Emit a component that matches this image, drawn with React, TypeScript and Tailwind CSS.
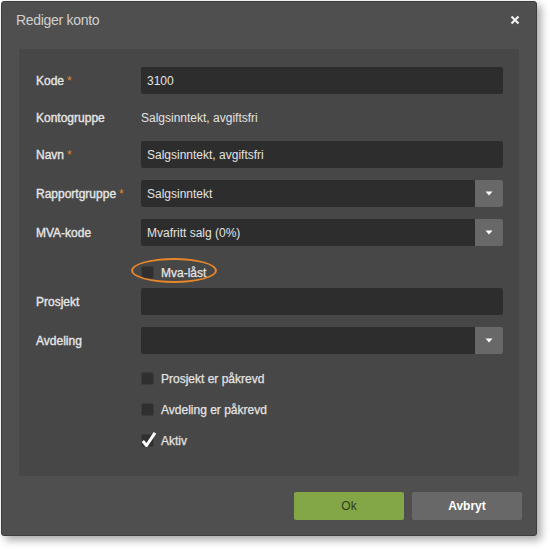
import React from 'react';

const font = { fontFamily: '"Liberation Sans", Arial, sans-serif' };

const Req = () => <span className="text-[#e08a24] ml-[3px] [-webkit-text-stroke:0px]">*</span>;

const Caret = () => (
  <div className="w-[28px] h-full bg-[#686868] rounded-r-[2px] flex items-center justify-center">
    <svg width="8" height="5" viewBox="0 0 8 5">
      <path d="M0.5 0.5 H7.5 L4 4.5 Z" fill="#fff" />
    </svg>
  </div>
);

const Input = ({ value, select }: { value?: string; select?: boolean }) => (
  <div className="flex-1 h-[27px] bg-[#2d2d2d] rounded-[2px] flex items-center">
    <span className="flex-1 pl-[6px] text-[12px] text-[#e2e2e2]">{value}</span>
    {select && <Caret />}
  </div>
);

const Row = ({ label, req, children, h = 27, mb = 12 }: { label: string; req?: boolean; children: React.ReactNode; h?: number; mb?: number }) => (
  <div className="flex items-center" style={{ height: h, marginBottom: mb }}>
    <div className="w-[105px] text-[12px] text-[#e6e6e6]">
      <span className="[-webkit-text-stroke:0.35px_#e6e6e6]">{label}</span>
      {req && <Req />}
    </div>
    {children}
  </div>
);

const Check = ({ label, checked }: { label: string; checked?: boolean }) => (
  <div className="flex items-center h-[31px] pl-[105px]">
    <div className="relative w-[13px] h-[13px] bg-[#2f2f2f] border border-[#3c3c3c] rounded-[2px]">
      {checked && (
        <svg className="absolute left-[-1px] top-[-4px]" width="16" height="17" viewBox="0 0 16 17">
          <path d="M1.8 10 L5.5 14.5 L14 1.8" stroke="#fff" strokeWidth="3" fill="none" strokeLinejoin="round" />
        </svg>
      )}
    </div>
    <span className="ml-[7px] text-[12px] text-[#e4e4e4] [-webkit-text-stroke:0.25px_#e4e4e4]">{label}</span>
  </div>
);

export default function App() {
  return (
    <div className="w-[550px] h-[549px] bg-white" style={font}>
      <div className="absolute left-[1px] top-[1px] w-[536px] h-[535px] bg-[#4f4f4f] border border-[#3d3d3d] rounded-[3px] shadow-[4px_4px_8px_rgba(0,0,0,0.35)] flex flex-col">
        <div className="h-[47px] flex items-center justify-between pl-[14px] pr-[16px] pb-[11px]">
          <span className="text-[14px] text-[#d0d0d0] tracking-[-0.3px]">Rediger konto</span>
          <svg width="10" height="10" viewBox="0 0 10 10">
            <path d="M1.5 1.5 L8.5 8.5 M8.5 1.5 L1.5 8.5" stroke="#f0f0f0" strokeWidth="2.2" />
          </svg>
        </div>
        <div className="mx-[17px] h-[427px] bg-[#474747] rounded-[2px] pt-[18px] pl-[17px] pr-[16px]">
          <Row label="Kode" req>
            <Input value="3100" />
          </Row>
          <Row label="Kontogruppe" h={23}>
            <span className="text-[12px] text-[#e2e2e2]">Salgsinntekt, avgiftsfri</span>
          </Row>
          <Row label="Navn" req>
            <Input value="Salgsinntekt, avgiftsfri" />
          </Row>
          <Row label="Rapportgruppe" req>
            <Input value="Salgsinntekt" select />
          </Row>
          <Row label="MVA-kode">
            <Input value="Mvafritt salg (0%)" select />
          </Row>
          <div className="relative h-[26px] mb-[5px]">
            <div className="relative -mt-[1px]">
              <Check label="Mva-låst" />
            </div>
            <div className="absolute left-[95px] top-[1px] w-[86px] h-[25px] border-[2.5px] border-[#e8862a] rounded-[50%]" />
          </div>
          <Row label="Prosjekt">
            <Input />
          </Row>
          <Row label="Avdeling" mb={9}>
            <Input select />
          </Row>
          <Check label="Prosjekt er påkrevd" />
          <Check label="Avdeling er påkrevd" />
          <Check label="Aktiv" checked />
        </div>
        <div className="flex justify-end gap-[8px] pr-[14px] pt-[16px]">
          <button className="w-[110px] h-[28px] bg-[#83a747] rounded-[2px] text-[12px] text-[#2f3a1e]">Ok</button>
          <button className="w-[110px] h-[28px] bg-[#686868] rounded-[2px] text-[12px] font-bold text-white">Avbryt</button>
        </div>
      </div>
    </div>
  );
}
